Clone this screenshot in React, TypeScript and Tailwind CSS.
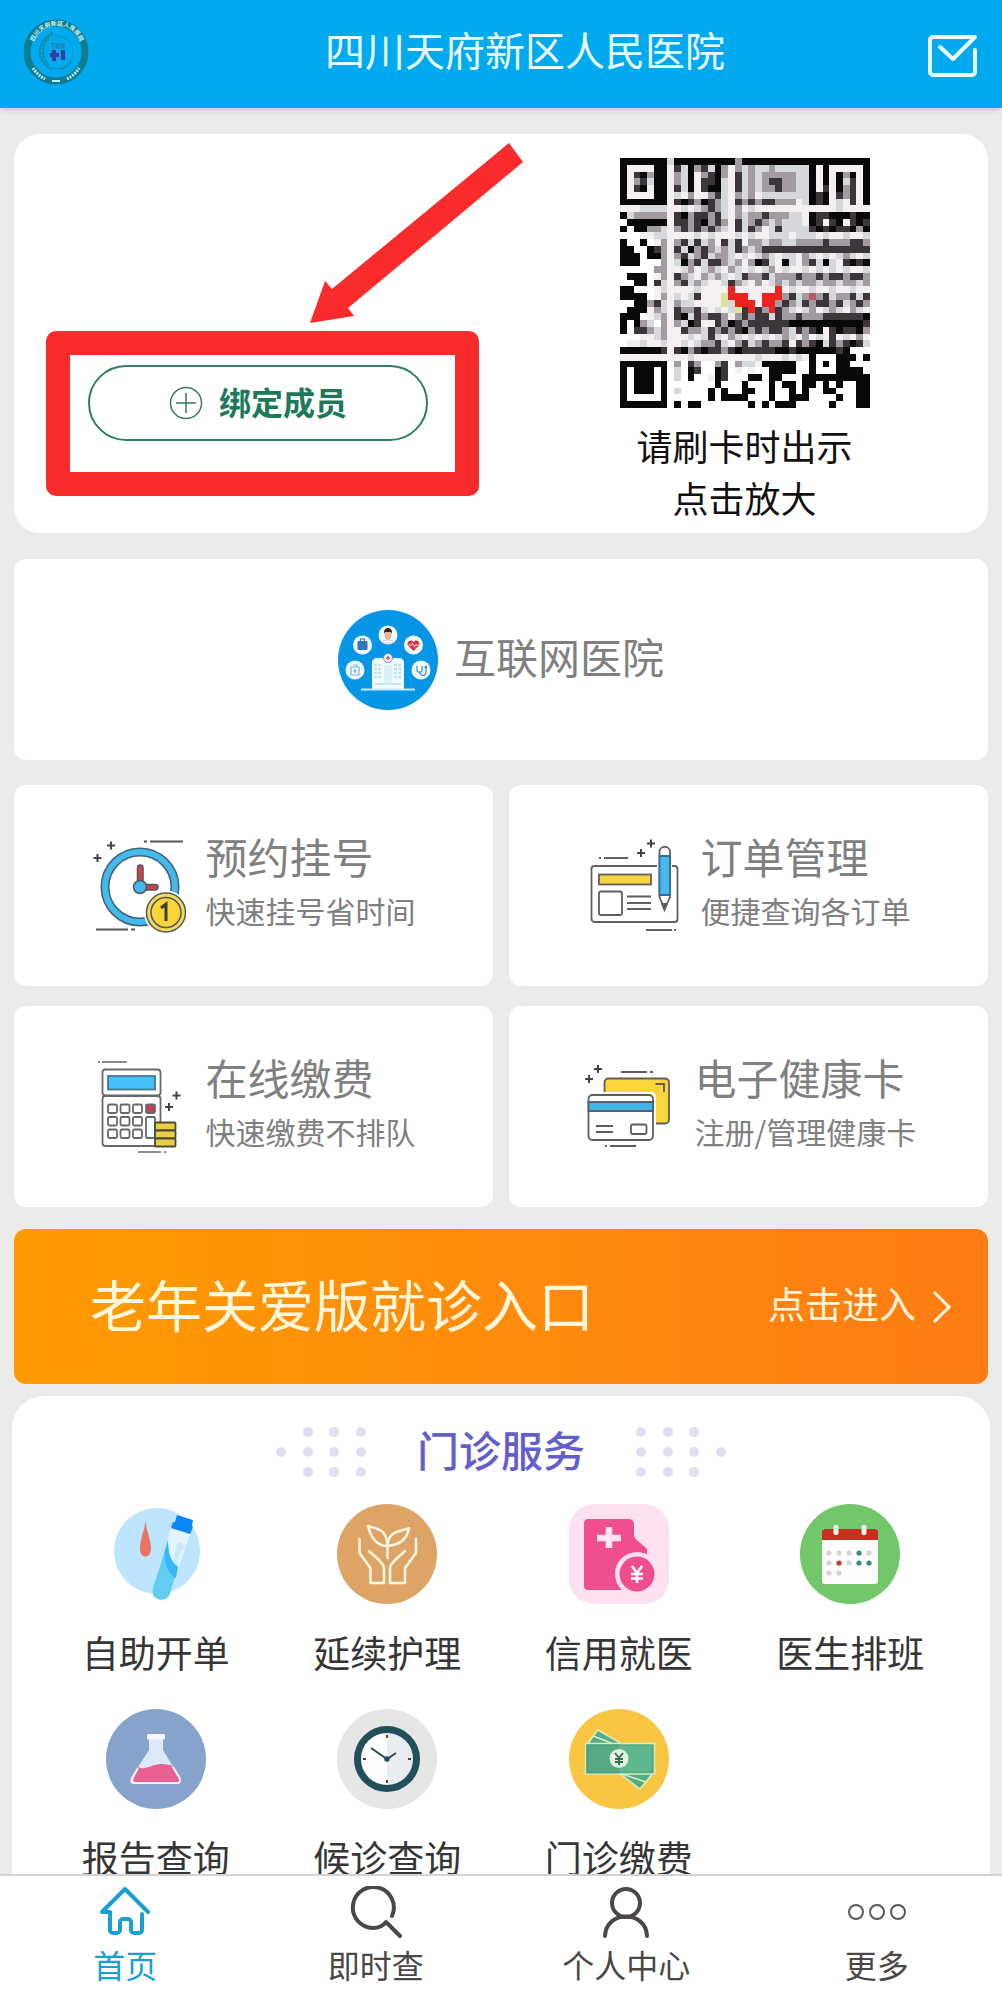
import type { ReactNode } from 'react';

type IconProps = { className?: string };

const codeRows = [
  '#######l#########m###################',
  '#wwww##wdl#mdl#mwmlmllmlllll#w#wwwww#',
  '#wd#m##wml#wmd#mwdlmlmmmmmll#w#w#m#w#',
  '#wmdl##wml#wdd#lwdlmlmddmmll#w#w#ldw#',
  '#wd#w##wdl#wd##lwdlmlmmdmmll#wdw#mdw#',
  '#wwww##wlwmwwmdlwmlmwlllllll#d#wdmdw#',
  '#######wd#dm#dmlwdmdmddmmmwl#d#wlwdw#',
  'wwwllllwwlwlmdmlwmwlwwwwwwwwwwwwlwwww',
  '#lmmmmmwd#mddmdlwmlmmdmmmllw#dd###d##',
  '.######wddmd#mdmwdlmdmlmlllw#dwd#wd#d',
  '#.##mmlwmdmdmdmlwdldmwldlllld#d#dd#m#',
  '...wwllwwwwlwlwwwlwlwwlllwlllwlwwlwwl',
  '#..#.wmwmdldlmwdldwmmlmmllmmmmdmmmddm',
  '##..#dmwdl#mdmlmldmlmdddddddddddddddd',
  '###.##mwmdlmdlmmlwlwlmlwllwmlwlwlmlwl',
  '###...mwl#mdlddmlmwm#dlw#lwmdl#lwd#d#',
  '.....mmwwlmwlmlwmlwlwlmwlwwlwlwlwlwwl',
  '.###.wmwdmlwmlmlwldmmdlmmmdmmdmddmddm',
  '..##.dlwmdlmlwwldmlwmwlmlmlmmlmmlmmlm',
  '##...wlwwwwlwwwwrwwwwwwrwlwwlwwlwwlww',
  '####.wmwlwldwwwyrrrwwrrrmdlmpmdlmmdld',
  '..##mdlwmllwwwwylrrrwrrmdmldmddmdlmdm',
  '.###wmlwdmmdlwlwlydrdmrdmlwlmwlmlwmlw',
  '###.wlmwd#ldmddmwmdmddldmmdmmmdddddd#',
  '#.#ml.mwml#dwwdm#dmdddddd###########d',
  '#.ddmlmwwdmmldmdmd#mdmddmldmd#wd#dd#m',
  '...wwlmwwwlwldlwmlwlwlwlmlwmwlwdwlwmw',
  '.wwlwwlwwlwlmmdlwmdlmdmmdwdmd#ldmd#dl',
  '######dwd#md#ddmd#ddddd##d######d#...',
  'wwwwwwwwwwlwwwwwwwwwlwwwlwlw#...###.#',
  '#######.m.dm..md.mllw#####..#.#.##...',
  '#.###.#.l.#d..#d.w.w..####..#...####.',
  '#.###.#.l.#..w#d...##.##...##########',
  '#.###.#.......#...#...#.##.##.#.#..##',
  '#.###.#.l....#.#..##..#..#.#..##...##',
  '#.....#......#.####...#..###....#..##',
  '#######.#.##.......#.#.###.....#...##',
];

const codeColors: Record<string, string> = {
  '#': '#0a090a',
  d: '#3c3539',
  m: '#a29ba1',
  l: '#d6d8dc',
  w: '#f4f0f1',
  r: '#ee2320',
  p: '#b8576a',
  y: '#dfe3a0',
};

const CardCode = ({ className }: IconProps) => (
  <svg viewBox="0 0 37 37" className={className} shapeRendering="crispEdges" aria-hidden="true">
    {codeRows.map((row, y) =>
      row.split('').map((cell, x) =>
        codeColors[cell] ? (
          <rect key={`${x}-${y}`} x={x} y={y} width="1" height="1" fill={codeColors[cell]} />
        ) : null
      )
    )}
  </svg>
);

const HospitalLogo = ({ className }: IconProps) => (
  <svg viewBox="0 0 66 66" className={className} aria-hidden="true">
    <defs>
      <path id="logo-top" d="M9.5 38 A24.5 24.5 0 1 1 56.5 38" />
    </defs>
    <circle cx="32" cy="33" r="29" fill="none" stroke="#0f7c90" strokeWidth="7" />
    <text fontSize="6" fontWeight="700" fill="#c9f3f5" textAnchor="middle">
      <textPath href="#logo-top" startOffset="50%">四川天府新区人民医院</textPath>
    </text>
    <path d="M9 49 A29 29 0 0 0 21 60 M43 60 A29 29 0 0 0 55 49" fill="none" stroke="#b9ecf0" strokeWidth="3" strokeDasharray="2 1" />
    <path d="M28 62h8" stroke="#b9ecf0" strokeWidth="2" />
    <circle cx="32" cy="33" r="17" fill="none" stroke="#0f94bd" strokeWidth="1" />
    <path d="M29 14 C13 20 11 42 27 50 M25 18 C17 26 17 40 25 46" fill="none" stroke="#118cab" strokeWidth="2" strokeDasharray="3 1" />
    <path d="M33 18h8M35 50c6 0 10-3 13-8" stroke="#118cab" strokeWidth="1" fill="none" />
    <text x="34" y="30" fontSize="7" fontWeight="700" fill="#2a78a6" textAnchor="middle">TRN</text>
    <path d="M26 36h9M30 31v11" stroke="#3b3b9d" strokeWidth="4" />
    <path d="M39 31v10" stroke="#3b3b9d" strokeWidth="4" />
  </svg>
);

const MailIcon = ({ className }: IconProps) => (
  <svg viewBox="0 0 50 42" className={className} fill="none" stroke="#eafcff" strokeWidth="4" strokeLinecap="round" strokeLinejoin="round" aria-hidden="true">
    <path d="M47 15v22a3 3 0 0 1-3 3H5a3 3 0 0 1-3-3V5a3 3 0 0 1 3-3h42L25 24 12 12" />
  </svg>
);

const PlusCircle = ({ className }: IconProps) => (
  <svg viewBox="0 0 34 34" className={className} fill="none" stroke="#3a7566" aria-hidden="true">
    <circle cx="17" cy="17" r="15.500" strokeWidth="1.500" />
    <path d="M17 7v20M7 17h20" strokeWidth="1.500" />
  </svg>
);

const Arrow = ({ className }: IconProps) => (
  <svg viewBox="0 0 214 180" className={className} aria-hidden="true">
    <path d="M199 0 L213 19 L38 165 L44 173 L0 180 L15 138 L22 146 Z" fill="#fa2b2d" />
  </svg>
);

const OnlineHospitalIcon = ({ className }: IconProps) => (
  <svg viewBox="0 0 100 100" className={className} aria-hidden="true">
    <circle cx="50" cy="50" r="50" fill="#0795e6" />
    <g fill="#eefaff">
      <circle cx="50" cy="25" r="9.500" />
      <circle cx="24.500" cy="35" r="9.500" />
      <circle cx="75.500" cy="35" r="9.500" />
      <circle cx="17" cy="60" r="9.500" />
      <circle cx="83" cy="60" r="9.500" />
    </g>
    <path d="M44 33c1-4 11-4 12 0z" fill="#fff" stroke="#c3a69a" strokeWidth=".6" />
    <ellipse cx="50" cy="25" rx="3.500" ry="5" fill="#e8b48f" />
    <path d="M46 24c-1-8 9-8 8 0l-1-2h-6z" fill="#3a2420" />
    <rect x="19.500" y="31" width="10" height="9" rx="1" fill="#3275b4" />
    <path d="M22.500 31v-2h4v2" fill="none" stroke="#3275b4" strokeWidth="1.200" />
    <path d="M75.500 41l-5.500-5.500c-2-4 3-7 5.500-3.500 2.500-3.500 7.500-.5 5.500 3.500z" fill="#d8374a" />
    <path d="M70.500 35h3l1-2 2 4 1-2h3" fill="none" stroke="#fff" strokeWidth=".8" />
    <path d="M13 57h8v8h-8zM15 55h4v2M17 59v4M15 61h4" fill="none" stroke="#7fb6dc" strokeWidth="1.200" />
    <path d="M79 56v4c0 3 5 3 5 0v-4M82 62c0 5 6 4 6 0v-4" fill="none" stroke="#4c97c8" strokeWidth="1.300" />
    <circle cx="88" cy="57" r="1.500" fill="#4c97c8" />
    <path d="M34 79V51l3-3h26l3 3v28z" fill="#f3fbff" />
    <path d="M36 55h8M36 59h8M36 63h8M36 67h8M56 55h8M56 59h8M56 63h8M56 67h8" stroke="#bfe3f6" strokeWidth="2.500" strokeDasharray="3 1" />
    <path d="M46 55h8v18h-8z" fill="#d9effa" />
    <path d="M37 74h26" stroke="#c9e7f5" strokeWidth="2" />
    <path d="M23 79.500h54" stroke="#c4ecfd" strokeWidth="2" />
    <circle cx="50" cy="48" r="4.500" fill="#e9f3fb" stroke="#7e86b5" strokeWidth="1" />
    <path d="M48 48h4M50 46v4" stroke="#d65563" strokeWidth="1.300" />
  </svg>
);

const Sparkle = ({ x, y }: { x: number; y: number }) => (
  <path d={`M${x - 4} ${y}h8M${x} ${y - 4}v8`} stroke="#45434a" strokeWidth="2" />
);

const BookingIcon = ({ className }: IconProps) => (
  <svg viewBox="0 0 94 94" className={className} fill="none" stroke="#56565a" strokeWidth="1.500" aria-hidden="true">
    <circle cx="48" cy="48" r="35" stroke="#3f6274" strokeWidth="9" />
    <circle cx="48" cy="48" r="35" stroke="#45b9ec" strokeWidth="6" />
    <rect x="45.500" y="26" width="5.500" height="18" rx="2.700" fill="#c9434d" />
    <rect x="52" y="45.500" width="14" height="5.500" rx="2.700" fill="#c9434d" />
    <circle cx="48" cy="48" r="6.500" fill="#42b8ec" />
    <circle cx="74" cy="73.500" r="22" fill="#fff" stroke="none" />
    <circle cx="74" cy="73.500" r="19.500" fill="#f0d95c" />
    <circle cx="74" cy="73.500" r="15" fill="#fbd437" />
    <path d="M69 69l5-4v17" stroke="#3f3c35" strokeWidth="3" />
    <path d="M52 2.500h3M58 2.500h33M4 90.500h32M39 90.500h4" strokeWidth="2" />
    <Sparkle x={19} y={6.5} />
    <Sparkle x={5.5} y={19} />
  </svg>
);

const OrderIcon = ({ className }: IconProps) => (
  <svg viewBox="0 0 94 94" className={className} fill="none" stroke="#5f5f64" strokeWidth="1.800" aria-hidden="true">
    <rect x="4.500" y="27" width="86" height="56" rx="3" />
    <path d="M70 25h15v4H70z" fill="#fff" stroke="none" />
    <rect x="12" y="35.500" width="52" height="10" fill="#f6d33f" />
    <rect x="12" y="52.500" width="23" height="23.500" rx="2" />
    <path d="M40 57.500h24M40 64h24M40 70h24" />
    <path d="M72.500 13c0-7 10.500-7 10.500 0v45l-5.500 12-5-12z" fill="#fff" />
    <path d="M72.500 17H83v39H72.500z" fill="#45b9f2" stroke="#376e8c" />
    <path d="M75 65h5l-2.500 6z" fill="#56565a" />
    <path d="M12 19h2M17 19h24M59 91h26M87 91h2" />
    <Sparkle x={54} y={14} />
    <Sparkle x={64} y={4.5} />
  </svg>
);

const PaymentIcon = ({ className }: IconProps) => (
  <svg viewBox="0 0 94 94" className={className} fill="none" stroke="#68686c" strokeWidth="1.800" aria-hidden="true">
    <rect x="10.500" y="9.500" width="58" height="26" rx="3" />
    <rect x="10.500" y="36" width="58" height="50" rx="3" />
    <rect x="16" y="16" width="47" height="13.500" fill="#43c2f8" stroke="#47758a" />
    {[44.5, 57, 69.5].map((y) =>
      [16, 28.5, 41].map((x) => <rect key={`${x}-${y}`} x={x} y={y} width="9" height="8.500" rx="1.500" />)
    )}
    <rect x="54" y="44.500" width="9" height="8.500" rx="1.500" fill="#c4414e" />
    <rect x="54" y="57" width="9" height="21" rx="1.500" fill="#f2fbff" />
    <g fill="#e6ce45" stroke="#4c4a35">
      <rect x="63" y="62.500" width="20.500" height="8" rx="1" />
      <rect x="63" y="70.500" width="20.500" height="8" rx="1" />
      <rect x="63" y="78.500" width="20.500" height="8" rx="1" />
    </g>
    <path d="M6 2h2M10 2h25M46 92h23M72 92h2" strokeWidth="1.300" />
    <Sparkle x={84.5} y={35.5} />
    <Sparkle x={77} y={47} />
  </svg>
);

const HealthCardIcon = ({ className }: IconProps) => (
  <svg viewBox="0 0 94 94" className={className} fill="none" stroke="#5d5d62" strokeWidth="1.800" aria-hidden="true">
    <rect x="23.500" y="18.500" width="64.500" height="45" rx="4" fill="#fbd53a" />
    <path d="M74.500 24H83v8" />
    <rect x="4" y="32" width="71" height="51" rx="5" fill="#fff" stroke="none" />
    <rect x="7.500" y="35" width="64.500" height="45" rx="4" fill="#fff" />
    <path d="M7.500 42H72v9H7.500z" fill="#42b4e6" />
    <path d="M15 66h17M15 72h17" />
    <rect x="50" y="64.500" width="15.500" height="9.500" rx="2" />
    <path d="M40 12h26M69 12h3M24 86h2M29 86h26" />
    <Sparkle x={17} y={9} />
    <Sparkle x={8} y={19} />
  </svg>
);

const SelfServiceIcon = () => (
  <svg viewBox="0 0 100 100" className="size-[100px]" aria-hidden="true">
    <circle cx="51" cy="47" r="43" fill="#bde5fd" />
    <path d="M39.500 17c1 10 5.500 18 5.500 28 0 10-11 10-11 0 0-10 4.500-18 5.500-28z" fill="#e87560" />
    <path d="M65 24l19 6-20 60c-4 10-21 6-17-6z" fill="#e4f5fe" />
    <path d="M80 42c-6 4-8 10-8 22l-10 28-4-4 14-50z" fill="#c5e9fd" />
    <path d="M62 36c0 14 3 22 10 27l-8 27c-4 10-21 6-17-6z" fill="#62cdf0" />
    <path d="M59 47c-1 14 4 24 11 27l2-11c-7-5-10-13-10-27z" fill="#34b8f8" />
    <path d="M71 11l16 5-1 6 1 1-3 7-19-6 2-6 2 0z" fill="#0b87f7" />
  </svg>
);

const NursingIcon = () => (
  <svg viewBox="0 0 100 100" className="size-[100px]" fill="none" aria-hidden="true">
    <circle cx="50" cy="50" r="50" fill="#dda465" />
    <g stroke="#fff7e6" strokeWidth="2.500" strokeLinecap="round" strokeLinejoin="round">
      <path d="M22.500 35v14l11 15v15H47V64c0-4-3-5-5-8l-10-9" />
      <path d="M79 35v14L68 64v15H53V64c0-4 3-5 5-8l10-9" />
      <path d="M50.500 54V40" />
      <path d="M31 22c8 3 19 2 19.500 20C40 42 34 34 31 22z" />
      <path d="M72 24c-8 4-21 2-21.500 18C62 41 70 36 72 24z" />
    </g>
  </svg>
);

const CreditIcon = () => (
  <svg viewBox="0 0 100 100" className="size-[100px]" aria-hidden="true">
    <rect width="100" height="100" rx="25" fill="#fde1f1" />
    <path d="M19 15h41a5 5 0 0 1 5 5v10c0 3 1 5 4 7l9 8v41H19a4 4 0 0 1-4-4V19a4 4 0 0 1 4-4z" fill="#f04f8d" />
    <path d="M40 23v21M28 34h24" stroke="#fde6f2" strokeWidth="6.500" />
    <circle cx="68" cy="70" r="22" fill="#fde1f1" />
    <circle cx="68" cy="70" r="17.500" fill="#f04f8d" />
    <path d="M63 62l5 7 5-7M68 69v10M62 70h12M62 74.500h12" stroke="#fff" strokeWidth="2.500" fill="none" />
  </svg>
);

const dotColumns = [29, 39, 49, 59, 69];

const ScheduleIcon = () => (
  <svg viewBox="0 0 100 100" className="size-[100px]" aria-hidden="true">
    <circle cx="50" cy="50" r="50" fill="#72c76b" />
    <rect x="22" y="25" width="56" height="55" rx="3" fill="#fdfdfb" />
    <path d="M22 36v-8a3 3 0 0 1 3-3h50a3 3 0 0 1 3 3v8z" fill="#c62f1d" />
    <rect x="33.500" y="21" width="5" height="10" rx="2" fill="#fdf3ea" />
    <rect x="61.500" y="21" width="5" height="10" rx="2" fill="#fdf3ea" />
    {dotColumns.map((x) => (
      <circle key={x} cx={x} cy="49" r="2.600" fill={x === 59 ? '#3b8a8b' : '#d6d3d6'} />
    ))}
    {dotColumns.map((x) => (
      <circle key={x} cx={x} cy="59" r="2.600" fill={x > 50 ? '#3b8a8b' : x === 39 ? '#bd3f34' : '#d6d3d6'} />
    ))}
    <circle cx="29" cy="69" r="2.600" fill="#d6d3d6" />
    <circle cx="39" cy="69" r="2.600" fill="#d6d3d6" />
  </svg>
);

const ReportIcon = () => (
  <svg viewBox="0 0 100 100" className="size-[100px]" aria-hidden="true">
    <circle cx="50" cy="50" r="50" fill="#86a3cc" />
    <path d="M43 29h14v12l17 28c2 4 0 6-3 6H28c-3 0-5-2-3-6l18-28z" fill="#dbe9f9" />
    <path d="M32 58c6 4 12-2 22-3 6 0 9 1 11 1l8 14c1 3 0 4-3 4H30c-3 0-4-2-3-4z" fill="#ea5f91" />
    <path d="M32 59l-5 9c-2 4 0 6 2 6h42c3 0 4-2 2-6l-6-10" fill="none" stroke="#f4f1f8" strokeWidth="2" />
    <rect x="41" y="25" width="18" height="5.500" rx="1.500" fill="#f4f8fd" />
  </svg>
);

const WaitingIcon = () => (
  <svg viewBox="0 0 100 100" className="size-[100px]" fill="none" aria-hidden="true">
    <circle cx="50" cy="50" r="50" fill="#e6e6e6" />
    <circle cx="50" cy="50" r="30" fill="#fdfdfd" />
    <path d="M50 20a30 30 0 0 1 0 60z" fill="#e9edf0" />
    <circle cx="50" cy="50" r="29.500" stroke="#205059" strokeWidth="7" />
    <path d="M34 39l16 11 9-6" stroke="#2f4a4f" strokeWidth="2" />
    <circle cx="50" cy="50" r="2.800" fill="#205059" />
    <path d="M50 26v3M50 71v3M26 50h3M71 50h3" stroke="#3d4a4c" strokeWidth="2" />
  </svg>
);

const BillIcon = () => (
  <svg viewBox="0 0 100 100" className="size-[100px]" aria-hidden="true">
    <circle cx="50" cy="50" r="50" fill="#fac540" />
    <g fill="#55ad86" stroke="#d9edc5" strokeWidth="1.500">
      <path d="M29 21l24 14-5 12-30-12z" />
      <path d="M24 27l26 10-3 10-28-12z" />
      <path d="M50 64l21 16 14-17-5-5z" />
      <path d="M50 64l27 9 9-12-5-5z" />
      <rect x="16.500" y="34.500" width="69" height="30.500" />
    </g>
    <rect x="20" y="37" width="62" height="25" fill="#5fb68f" />
    <path d="M17 35h33v30H17z" fill="#3d8c6a" opacity=".3" />
    <circle cx="50" cy="49.500" r="9.500" fill="#e3f2dc" />
    <path d="M46 44l4 5 4-5M50 49v7M46 50h8M46 53h8" stroke="#3d6f58" strokeWidth="2" fill="none" />
  </svg>
);

const HomeIcon = () => (
  <svg viewBox="0 0 52 52" className="size-[52px]" fill="none" stroke="#199fd4" strokeWidth="4" strokeLinecap="round" strokeLinejoin="round" aria-hidden="true">
    <path d="M43 28v16a3 3 0 0 1-3 3h-5a3 3 0 0 1-3-3v-8a3 3 0 0 0-3-3h-5a3 3 0 0 0-3 3v8a3 3 0 0 1-3 3h-4a3 3 0 0 1-3-3V26H3L26 3l23 23" />
  </svg>
);

const SearchIcon = () => (
  <svg viewBox="0 0 52 52" className="size-[52px]" fill="none" stroke="#4b4747" strokeWidth="4" strokeLinecap="round" strokeLinejoin="round" aria-hidden="true">
    <path d="M42 30A20.500 20.500 0 1 0 23 42c6 0 10-2 13-6l14 14" />
  </svg>
);

const PersonIcon = () => (
  <svg viewBox="0 0 52 52" className="size-[52px]" fill="none" stroke="#4b4747" strokeWidth="4" strokeLinecap="round" aria-hidden="true">
    <circle cx="26" cy="17" r="14" />
    <path d="M5 50c1-26 41-26 42 0" />
  </svg>
);

const MoreIcon = () => (
  <svg viewBox="0 0 60 52" className="h-[52px] w-[60px]" fill="none" stroke="#5c5858" strokeWidth="2" aria-hidden="true">
    <circle cx="9" cy="26" r="7" />
    <circle cx="30" cy="26" r="7" />
    <circle cx="51" cy="26" r="7" />
  </svg>
);

const Dots = ({ className }: IconProps) => (
  <svg viewBox="0 0 90 50" className={className} fill="#e1def0" aria-hidden="true">
    {[5, 25, 45].map((y) => [32, 58, 85].map((x) => <circle key={`${x}-${y}`} cx={x} cy={y} r="5" />))}
    <circle cx="5" cy="25" r="5" />
  </svg>
);

const shortcuts = [
  { title: '预约挂号', note: '快速挂号省时间', icon: BookingIcon },
  { title: '订单管理', note: '便捷查询各订单', icon: OrderIcon },
  { title: '在线缴费', note: '快速缴费不排队', icon: PaymentIcon },
  { title: '电子健康卡', note: '注册/管理健康卡', icon: HealthCardIcon },
];

const services = [
  { label: '自助开单', icon: SelfServiceIcon },
  { label: '延续护理', icon: NursingIcon },
  { label: '信用就医', icon: CreditIcon },
  { label: '医生排班', icon: ScheduleIcon },
  { label: '报告查询', icon: ReportIcon },
  { label: '候诊查询', icon: WaitingIcon },
  { label: '门诊缴费', icon: BillIcon },
];

const Header = () => (
  <header className="relative flex h-[108px] items-center bg-[#01a9ef] px-6 pb-1 shadow-md">
    <HospitalLogo className="size-[66px]" />
    <h1 className="flex-1 pb-1.5 pl-8 text-center text-[40px] leading-[60px] text-[#eafcff]">四川天府新区人民医院</h1>
    <button type="button" aria-label="消息">
      <MailIcon className="mt-2 h-[42px] w-[50px]" />
    </button>
  </header>
);

const MemberCard = () => (
  <section className="relative grid grid-cols-2 rounded-[26px] bg-white pt-6 pb-[10px]">
    <div className="flex items-end pb-[27px] pl-8">
      <div className="w-[433px] rounded-[10px] bg-[#fa2b2d] p-6">
        <div className="bg-white pt-[10px] pr-[27px] pb-[31px] pl-[18px]">
          <button
            type="button"
            className="flex h-[76px] w-full items-center justify-center gap-4 rounded-full border-2 border-[#2f7f65] text-[32px] font-bold text-[#1c7a58]"
          >
            <PlusCircle className="size-[34px]" />
            <span className="pb-1">绑定成员</span>
          </button>
        </div>
      </div>
    </div>
    <button type="button" className="flex flex-col items-center text-[36px] leading-[52px] text-[#111]">
      <CardCode className="mb-[11px] size-[250px]" />
      <span>请刷卡时出示</span>
      <span>点击放大</span>
    </button>
    <Arrow className="absolute top-[9px] left-[296px] w-[214px]" />
  </section>
);

const Shortcuts = () => (
  <section className="mt-[25px] grid grid-cols-2 gap-x-4 gap-y-5">
    {shortcuts.map(({ title, note, icon: Icon }) => (
      <a key={title} href="#" className="flex h-[201px] items-center justify-center gap-5 rounded-xl bg-white text-[#808080]">
        <Icon className="size-[94px]" />
        <span className="flex flex-col pb-1.5">
          <span className="text-[42px] leading-[54px]">{title}</span>
          <span className="text-[30px] leading-[54px]">{note}</span>
        </span>
      </a>
    ))}
  </section>
);

const Services = () => (
  <section className="-mx-0.5 mt-3 flex-1 rounded-t-[32px] bg-white pt-[23px]">
    <div className="flex items-center justify-center gap-[51px]">
      <Dots className="mt-1.5 w-[90px]" />
      <h2 className="text-[42px] leading-[60px] font-medium text-[#625ecb]">门诊服务</h2>
      <Dots className="mt-1.5 w-[90px] rotate-180" />
    </div>
    <div className="mt-[25px] grid grid-cols-4 gap-y-8 pr-6 pl-7">
      {services.map(({ label, icon: Icon }) => (
        <a key={label} href="#" className="flex flex-col items-center gap-[23px] text-[37px] leading-[50px] text-[#363636]">
          <Icon />
          {label}
        </a>
      ))}
    </div>
  </section>
);

const Tab = ({ label, active, children }: { label: string; active?: boolean; children: ReactNode }) => (
  <a href="#" className={`flex flex-col items-center gap-1.5 text-[32px] leading-10 ${active ? 'text-[#199fd4]' : 'text-[#4b4747]'}`}>
    {children}
    {label}
  </a>
);

const App = () => (
  <div className="flex min-h-screen flex-col bg-[#ebebe9] font-['Noto_Sans_CJK_SC',sans-serif]">
    <Header />
    <main className="flex flex-1 flex-col px-[14px] pt-[26px]">
      <MemberCard />
      <a href="#" className="mt-[26px] flex h-[201px] items-center justify-center gap-4 rounded-xl bg-white text-[42px] text-[#808080]">
        <OnlineHospitalIcon className="size-[100px]" />
        <span className="pb-2">互联网医院</span>
      </a>
      <Shortcuts />
      <a
        href="#"
        className="mt-[22px] flex h-[155px] items-center justify-between rounded-xl bg-linear-to-r from-[#ff9b00] to-[#ff7c14] pr-9 pl-[76px] text-[#fff6dc]"
      >
        <span className="pb-2 text-[56px]">老年关爱版就诊入口</span>
        <span className="flex items-center gap-4 text-[37px]">
          <span className="pb-1.5">点击进入</span>
          <svg viewBox="0 0 20 34" className="w-5" fill="none" stroke="currentColor" strokeWidth="3" aria-hidden="true">
            <path d="M2 2l15 15L2 32" />
          </svg>
        </span>
      </a>
      <Services />
    </main>
    <nav className="fixed inset-x-0 bottom-0 grid grid-cols-4 border-t-2 border-[#d3d3d1] bg-white pt-[10px] pb-4">
      <Tab label="首页" active><HomeIcon /></Tab>
      <Tab label="即时查"><SearchIcon /></Tab>
      <Tab label="个人中心"><PersonIcon /></Tab>
      <Tab label="更多"><MoreIcon /></Tab>
    </nav>
  </div>
);

export default App;
